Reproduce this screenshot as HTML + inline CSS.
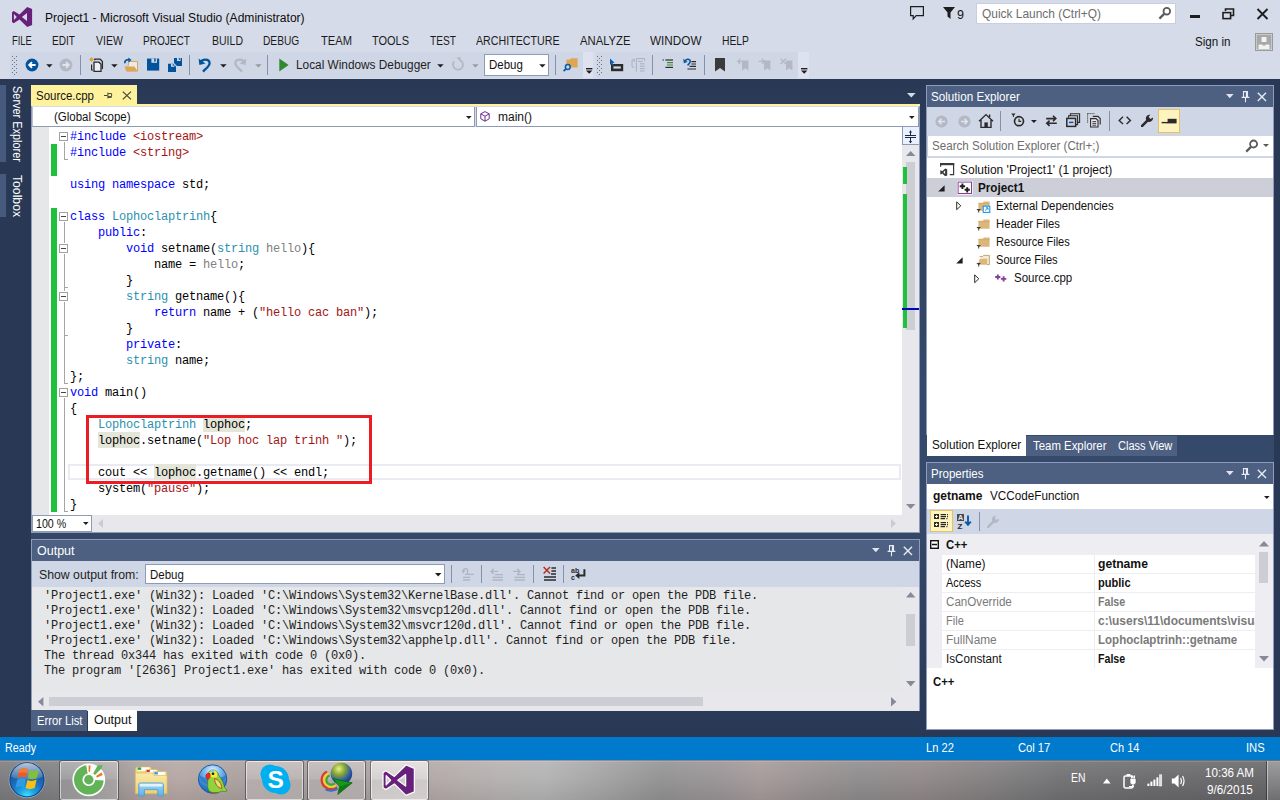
<!DOCTYPE html>
<html lang="en">
<head>
<meta charset="utf-8">
<title>Project1 - Microsoft Visual Studio (Administrator)</title>
<style>
*{box-sizing:border-box;margin:0;padding:0}
html,body{width:1280px;height:800px;overflow:hidden;background:#293955}
body{position:relative;font-family:"Liberation Sans",sans-serif;font-size:12px;color:#1e1e1e}
.a{position:absolute}
.t{position:absolute;white-space:pre;line-height:16px;height:16px;transform-origin:0 0}
.mono{font-family:"Liberation Mono",monospace}
.k{color:#0000ff}.s{color:#a31515}.ty{color:#2b91af}.p{color:#808080}
.hl{background:#e4e6d9;display:inline-block;height:16px;line-height:18px;vertical-align:top}
.cl{position:absolute;left:70px;height:16px;line-height:18px;white-space:pre;font-family:"Liberation Mono",monospace;font-size:12px;color:#000;letter-spacing:-0.2px}
.ot{position:absolute;left:44px;height:15px;line-height:15px;white-space:pre;font-family:"Liberation Mono",monospace;font-size:12px;color:#1e1e1e;letter-spacing:-0.2px}
</style>
</head>
<body>
<div class="a" style="left:0;top:0;width:1280px;height:79px;background:#d6dbe9"></div>
<div class="a" style="left:31px;top:79px;width:1243px;height:658px;background:linear-gradient(180deg,#293955 0%,#35496a 45%,#35496a 65%,#293955 100%)"></div>
<!-- top -->
<svg class="a" style="left:12px;top:7px" width="21" height="21" viewBox="0 0 21 21"><path d="M15.2 0 L20.1 1.9 V17.9 L15.2 20.1 L7.5 12.6 L1.7 16.2 L0 15 V5.2 L1.7 4 L7.5 7.6 Z M15 6 L9.9 10.05 L15 14.1 Z M1.9 7 V13 L4.8 10 Z" fill="#68217a" fill-rule="evenodd"/></svg>
<div class="t" style="left:44.5px;top:10px;font-size:12.5px;color:#0c0c0c;transform:scaleX(0.964);">Project1 - Microsoft Visual Studio (Administrator)</div>
<svg class="a" style="left:909px;top:5px" width="16" height="16" viewBox="0 0 16 16"><path d="M1.6 1.6 H14.4 V10.6 H7.2 L4.2 14 V10.6 H1.6 Z" fill="none" stroke="#1e1e1e" stroke-width="1.2"/></svg>
<svg class="a" style="left:943px;top:7px" width="13" height="13" viewBox="0 0 13 13"><path d="M0 0 H12 L7.5 5.5 V12 L4.5 9.5 V5.5 Z" fill="#1e1e1e"/></svg>
<div class="t" style="left:957px;top:7px;font-size:12.5px;color:#111;">9</div>
<div class="a" style="left:976px;top:3px;width:200px;height:21px;background:#fff;border:1px solid #c9cfdd"></div>
<div class="t" style="left:982px;top:6px;font-size:12.5px;color:#6d6d6d;transform:scaleX(0.954);">Quick Launch (Ctrl+Q)</div>
<svg class="a" style="left:1158px;top:6px" width="14" height="14" viewBox="0 0 14 14"><circle cx="8.8" cy="5.2" r="3.3" fill="none" stroke="#5a5a5a" stroke-width="1.8"/><path d="M6.4 7.6 L1.4 12.6" stroke="#5a5a5a" stroke-width="2.2"/></svg>
<div class="a" style="left:1190px;top:15px;width:10px;height:3px;background:#1e1e1e;"></div>
<svg class="a" style="left:1222px;top:8px" width="13" height="12" viewBox="0 0 13 12"><path d="M3.5 3 V1 H11.5 V7.5 H9" fill="none" stroke="#1e1e1e" stroke-width="1.6"/><rect x="1" y="4.6" width="7.6" height="6" fill="none" stroke="#1e1e1e" stroke-width="1.6"/></svg>
<svg class="a" style="left:1256px;top:8px" width="13" height="12" viewBox="0 0 13 12"><path d="M1.5 1 L11.5 11 M11.5 1 L1.5 11" stroke="#1e1e1e" stroke-width="1.9"/></svg>
<div class="t" style="left:11.5px;top:33px;font-size:12.5px;color:#1b1b1b;transform:scaleX(0.750);">FILE</div>
<div class="t" style="left:52px;top:33px;font-size:12.5px;color:#1b1b1b;transform:scaleX(0.808);">EDIT</div>
<div class="t" style="left:96px;top:33px;font-size:12.5px;color:#1b1b1b;transform:scaleX(0.839);">VIEW</div>
<div class="t" style="left:143px;top:33px;font-size:12.5px;color:#1b1b1b;transform:scaleX(0.806);">PROJECT</div>
<div class="t" style="left:211.5px;top:33px;font-size:12.5px;color:#1b1b1b;transform:scaleX(0.842);">BUILD</div>
<div class="t" style="left:263.4px;top:33px;font-size:12.5px;color:#1b1b1b;transform:scaleX(0.814);">DEBUG</div>
<div class="t" style="left:321px;top:33px;font-size:12.5px;color:#1b1b1b;transform:scaleX(0.893);">TEAM</div>
<div class="t" style="left:372px;top:33px;font-size:12.5px;color:#1b1b1b;transform:scaleX(0.878);">TOOLS</div>
<div class="t" style="left:429.5px;top:33px;font-size:12.5px;color:#1b1b1b;transform:scaleX(0.814);">TEST</div>
<div class="t" style="left:475.5px;top:33px;font-size:12.5px;color:#1b1b1b;transform:scaleX(0.853);">ARCHITECTURE</div>
<div class="t" style="left:579.5px;top:33px;font-size:12.5px;color:#1b1b1b;transform:scaleX(0.901);">ANALYZE</div>
<div class="t" style="left:650px;top:33px;font-size:12.5px;color:#1b1b1b;transform:scaleX(0.939);">WINDOW</div>
<div class="t" style="left:721.5px;top:33px;font-size:12.5px;color:#1b1b1b;transform:scaleX(0.827);">HELP</div>
<div class="t" style="left:1195px;top:34px;font-size:13px;color:#111;transform:scaleX(0.893);">Sign in</div>
<svg class="a" style="left:1255px;top:33px" width="18" height="18" viewBox="0 0 18 18"><rect x="0.5" y="0.5" width="17" height="17" fill="#e8e8ec" stroke="#9a9a9a"/><rect x="1.5" y="1.5" width="15" height="15" fill="#a8a8a8"/><rect x="6.5" y="4" width="5" height="5" fill="#f2f2f2"/><path d="M3.5 16 V11.5 H7 L9 13 L11 11.5 H14.5 V16 Z" fill="#f2f2f2"/></svg>
<div class="a" style="left:10px;top:52px;width:583px;height:26px;background:#cfd6e5;"></div>
<div class="a" style="left:596px;top:52px;width:212px;height:26px;background:#cfd6e5;"></div>
<!-- toolbar -->
<div class="a" style="left:583px;top:52px;width:10px;height:26px;background:#dde2ee;"></div>
<div class="a" style="left:798px;top:52px;width:11px;height:26px;background:#dde2ee;"></div>
<svg class="a" style="left:12px;top:56px" width="6" height="20" viewBox="0 0 6 20"><rect x="0" y="0" width="1" height="1" fill="#66728a"/><rect x="4" y="0" width="1" height="1" fill="#66728a"/><rect x="2" y="2" width="1" height="1" fill="#66728a"/><rect x="0" y="4" width="1" height="1" fill="#66728a"/><rect x="4" y="4" width="1" height="1" fill="#66728a"/><rect x="2" y="6" width="1" height="1" fill="#66728a"/><rect x="0" y="8" width="1" height="1" fill="#66728a"/><rect x="4" y="8" width="1" height="1" fill="#66728a"/><rect x="2" y="10" width="1" height="1" fill="#66728a"/><rect x="0" y="12" width="1" height="1" fill="#66728a"/><rect x="4" y="12" width="1" height="1" fill="#66728a"/><rect x="2" y="14" width="1" height="1" fill="#66728a"/><rect x="0" y="16" width="1" height="1" fill="#66728a"/><rect x="4" y="16" width="1" height="1" fill="#66728a"/><rect x="2" y="18" width="1" height="1" fill="#66728a"/></svg>
<svg class="a" style="left:25px;top:58px" width="14" height="14" viewBox="0 0 14 14"><circle cx="7" cy="7" r="6.4" fill="#00539c"/><path d="M10.6 7 H4.6 M7 4.2 L4.2 7 L7 9.8" fill="none" stroke="#fff" stroke-width="1.9"/></svg>
<svg class="a" style="left:45.5px;top:63.7px" width="7" height="4" viewBox="0 0 7 4"><path d="M0.2 0.2 H6.6 L3.4 3.4 Z" fill="#1e1e1e"/></svg>
<svg class="a" style="left:59px;top:58px" width="14" height="14" viewBox="0 0 14 14"><circle cx="7" cy="7" r="6.4" fill="#b3b8c4"/><path d="M3.4 7 H9.4 M7 4.2 L9.8 7 L7 9.8" fill="none" stroke="#dfe3ec" stroke-width="1.9"/></svg>
<div class="a" style="left:80px;top:55px;width:1px;height:20px;background:#8591a9;"></div>
<svg class="a" style="left:89px;top:57px" width="15" height="16" viewBox="0 0 15 16"><path d="M1 1 L4 4 M4 1 L1 4 M2.5 0.2 V4.8 M0.2 2.5 H4.8" stroke="#e0a030" stroke-width="0.9"/><path d="M5.8 3.2 V2.2 H11.2 L13.4 4.4 V12" fill="none" stroke="#2b2b2b" stroke-width="1.3"/><path d="M2.6 7.5 V13 H4" fill="none" stroke="#2b2b2b" stroke-width="1.2"/><path d="M5 5.2 H10 L12 7.2 V14.4 H5 Z" fill="#eef0f6" stroke="#2b2b2b" stroke-width="1.3"/></svg>
<svg class="a" style="left:110.5px;top:63.7px" width="7" height="4" viewBox="0 0 7 4"><path d="M0.2 0.2 H6.6 L3.4 3.4 Z" fill="#1e1e1e"/></svg>
<svg class="a" style="left:123px;top:57px" width="16" height="16" viewBox="0 0 16 16"><path d="M6 4.5 H14.5 V14 H4 Z" fill="#e8eaf2" stroke="#dca652" stroke-width="1"/><path d="M1.5 9.5 H11.5 L14.5 14.3 H3.2 Z" fill="#dca652"/><path d="M2 6.2 C1.2 3.2 4.2 2.2 6.8 2.9" fill="none" stroke="#0a5aa8" stroke-width="1.7"/><path d="M5.4 0.4 L8.6 3 L5.4 5.6 Z" fill="#0a5aa8"/></svg>
<svg class="a" style="left:147px;top:58px" width="13" height="13" viewBox="0 0 13 13"><path d="M0 0.6 H12.2 V12.6 H0 Z" fill="#00539c"/><rect x="4.4" y="0.6" width="5.6" height="4.2" fill="#cfd6e5"/><rect x="7.2" y="0.6" width="1.5" height="3" fill="#00539c"/></svg>
<svg class="a" style="left:168px;top:58px" width="15" height="15" viewBox="0 0 15 15"><path d="M6 0 H14 V8 H6 Z" fill="#00539c"/><rect x="9" y="0" width="3.6" height="3" fill="#cfd6e5"/><rect x="10.8" y="0" width="1" height="2" fill="#00539c"/><path d="M0 5.8 H7 L8 6.8 V14 H0 Z" fill="#00539c" stroke="#cfd6e5" stroke-width="0"/><path d="M5.4 5.2 L8.6 8.4" stroke="#cfd6e5" stroke-width="1.2"/><rect x="3" y="5.8" width="3.4" height="3" fill="#cfd6e5"/><rect x="4.7" y="5.8" width="1" height="2" fill="#00539c"/></svg>
<div class="a" style="left:189px;top:55px;width:1px;height:20px;background:#8591a9;"></div>
<svg class="a" style="left:198px;top:57px" width="14" height="16" viewBox="0 0 14 16"><path d="M2.2 6.2 C4 1.2 11.5 1.6 11.6 6.2 C11.6 9 8 11.5 5 14.6" fill="none" stroke="#00539c" stroke-width="2.3"/><path d="M0.6 1.6 L1.4 8 L7.4 6.4 Z" fill="#00539c"/></svg>
<svg class="a" style="left:219.8px;top:63.7px" width="7" height="4" viewBox="0 0 7 4"><path d="M0.2 0.2 H6.6 L3.4 3.4 Z" fill="#1e1e1e"/></svg>
<svg class="a" style="left:233px;top:57px" width="14" height="16" viewBox="0 0 14 16"><path d="M11.8 6.2 C10 1.2 2.5 1.6 2.4 6.2 C2.4 9 6 11.5 9 14.6" fill="none" stroke="#b3b8c4" stroke-width="2.3"/><path d="M13.4 1.6 L12.6 8 L6.6 6.4 Z" fill="#b3b8c4"/></svg>
<svg class="a" style="left:254.5px;top:63.7px" width="7" height="4" viewBox="0 0 7 4"><path d="M0.2 0.2 H6.6 L3.4 3.4 Z" fill="#9a9a9a"/></svg>
<div class="a" style="left:267px;top:55px;width:1px;height:20px;background:#8591a9;"></div>
<svg class="a" style="left:279px;top:58px" width="10" height="14" viewBox="0 0 10 14"><path d="M0.3 0.6 L9.6 7 L0.3 13.4 Z" fill="#2f8a2f"/></svg>
<div class="t" style="left:296.3px;top:57px;font-size:12.5px;color:#1e1e1e;transform:scaleX(0.946);">Local Windows Debugger</div>
<svg class="a" style="left:436.8px;top:63.7px" width="7" height="4" viewBox="0 0 7 4"><path d="M0.2 0.2 H6.6 L3.4 3.4 Z" fill="#1e1e1e"/></svg>
<svg class="a" style="left:451px;top:57px" width="14" height="15" viewBox="0 0 14 15"><path d="M9.6 3.4 A5 5 0 1 1 3.2 4.4" fill="none" stroke="#b3b8c4" stroke-width="1.7"/><path d="M5.6 0.6 L9.6 0.2 L9.8 5.4 Z" fill="#b3b8c4"/></svg>
<svg class="a" style="left:471.8px;top:63.7px" width="7" height="4" viewBox="0 0 7 4"><path d="M0.2 0.2 H6.6 L3.4 3.4 Z" fill="#9a9a9a"/></svg>
<div class="a" style="left:484px;top:54px;width:65px;height:22px;background:#fff;border:1px solid #8e9bb4"></div>
<div class="t" style="left:488.8px;top:57px;font-size:12.5px;color:#111;transform:scaleX(0.918);">Debug</div>
<svg class="a" style="left:538.6px;top:63.7px" width="7" height="4" viewBox="0 0 7 4"><path d="M0.2 0.2 H6.6 L3.4 3.4 Z" fill="#1e1e1e"/></svg>
<div class="a" style="left:555px;top:55px;width:1px;height:20px;background:#8591a9;"></div>
<svg class="a" style="left:563px;top:57px" width="16" height="15" viewBox="0 0 16 15"><path d="M3.4 2.6 H7 L8 1.2 H14.6 V10.6 H3.4 Z" fill="#dca652"/><circle cx="4.8" cy="10" r="2.4" fill="#cfd6e5" stroke="#0a5aa8" stroke-width="1.5"/><path d="M3 11.8 L0.6 14.2" stroke="#0a5aa8" stroke-width="1.8"/></svg>
<svg class="a" style="left:586px;top:68px" width="7" height="6" viewBox="0 0 7 6"><rect x="0" y="0" width="6.4" height="1.4" fill="#1e1e1e"/><path d="M0 2.6 H6.4 L3.2 5.8 Z" fill="#1e1e1e"/></svg>
<svg class="a" style="left:597px;top:56px" width="6" height="20" viewBox="0 0 6 20"><rect x="0" y="0" width="1" height="1" fill="#66728a"/><rect x="4" y="0" width="1" height="1" fill="#66728a"/><rect x="2" y="2" width="1" height="1" fill="#66728a"/><rect x="0" y="4" width="1" height="1" fill="#66728a"/><rect x="4" y="4" width="1" height="1" fill="#66728a"/><rect x="2" y="6" width="1" height="1" fill="#66728a"/><rect x="0" y="8" width="1" height="1" fill="#66728a"/><rect x="4" y="8" width="1" height="1" fill="#66728a"/><rect x="2" y="10" width="1" height="1" fill="#66728a"/><rect x="0" y="12" width="1" height="1" fill="#66728a"/><rect x="4" y="12" width="1" height="1" fill="#66728a"/><rect x="2" y="14" width="1" height="1" fill="#66728a"/><rect x="0" y="16" width="1" height="1" fill="#66728a"/><rect x="4" y="16" width="1" height="1" fill="#66728a"/><rect x="2" y="18" width="1" height="1" fill="#66728a"/></svg>
<svg class="a" style="left:609px;top:58px" width="15" height="14" viewBox="0 0 15 14"><rect x="2" y="6" width="12.2" height="7.2" fill="#2b2b2b"/><rect x="4.4" y="8.4" width="7.4" height="2.2" fill="#cfd6e5"/><path d="M1 0.6 L5.6 4.8 L3.6 5 L4.6 7.4 L3.4 7.8 L2.4 5.6 L1 7 Z" fill="#0a5aa8"/></svg>
<svg class="a" style="left:631px;top:58px" width="15" height="14" viewBox="0 0 15 14"><path d="M3.2 2 H1 V9 H3.2 M3.2 0.6 V4" fill="none" stroke="#aab0bf" stroke-width="1"/><path d="M5.4 0.6 H13.6 V3" fill="none" stroke="#aab0bf" stroke-width="1"/><path d="M5.4 0.6 V13.6" stroke="#aab0bf" stroke-width="1"/><path d="M7 3.4 H11.6 M9 5.8 H13.6 M9 8.2 H13.6 M9 10.6 H13.6 M9 13 H13.6" stroke="#aab0bf" stroke-width="1"/></svg>
<div class="a" style="left:652px;top:55px;width:1px;height:20px;background:#8591a9;"></div>
<svg class="a" style="left:662px;top:59px" width="12" height="11" viewBox="0 0 12 11"><path d="M0.6 1 H2" stroke="#2b2b2b" stroke-width="1"/><path d="M3.4 1 H11" stroke="#2b2b2b" stroke-width="1.2"/><path d="M5 3.6 H11 M5 6 H11" stroke="#3c8a2e" stroke-width="1.2"/><path d="M3.4 8.4 H11 " stroke="#2b2b2b" stroke-width="1.2"/><path d="M2 10.4 H11" stroke="#2b2b2b" stroke-width="0"/></svg>
<svg class="a" style="left:683px;top:58px" width="14" height="13" viewBox="0 0 14 13"><path d="M2 3.6 C3 0.2 7.4 0.8 7.2 3.6 C7.2 5.2 5.6 6 4.6 7.4" fill="none" stroke="#0a5aa8" stroke-width="1.6"/><path d="M0.2 0.8 L0.8 5.2 L4.6 4 Z" fill="#0a5aa8"/><path d="M8.4 3.6 H13 M8.4 6 H13 M6.6 8.4 H13 M4.4 11 H13" stroke="#2b2b2b" stroke-width="1.2"/></svg>
<div class="a" style="left:704px;top:55px;width:1px;height:20px;background:#8591a9;"></div>
<svg class="a" style="left:715px;top:58px" width="10" height="14" viewBox="0 0 10 14"><path d="M0 0 H10 V13.4 L5 10 L0 13.4 Z" fill="#3a3a3a"/></svg>
<svg class="a" style="left:737px;top:58px" width="12" height="13" viewBox="0 0 12 13"><path d="M5 2.4 H11.4 V12.6 L8.2 10.2 L5 12.6 Z" fill="#b3b8c4"/><path d="M1 3.4 H6.6 M3.2 1 L0.8 3.4 L3.2 5.8" fill="none" stroke="#b3b8c4" stroke-width="1.4"/></svg>
<svg class="a" style="left:758px;top:58px" width="13" height="13" viewBox="0 0 13 13"><path d="M6 2.4 H12.4 V12.6 L9.2 10.2 L6 12.6 Z" fill="#b3b8c4"/><path d="M0.6 3.4 H6.2 M4 1 L6.4 3.4 L4 5.8" fill="none" stroke="#b3b8c4" stroke-width="1.4"/></svg>
<svg class="a" style="left:780px;top:58px" width="13" height="13" viewBox="0 0 13 13"><path d="M6 2.4 H12.4 V12.6 L9.2 10.2 L6 12.6 Z" fill="#b3b8c4"/><path d="M0.6 0.6 L6 6 M6 0.6 L0.6 6" fill="none" stroke="#b3b8c4" stroke-width="1.3"/></svg>
<svg class="a" style="left:801px;top:68px" width="7" height="6" viewBox="0 0 7 6"><rect x="0" y="0" width="6.4" height="1.4" fill="#1e1e1e"/><path d="M0 2.6 H6.4 L3.2 5.8 Z" fill="#1e1e1e"/></svg>
<!-- left_editor -->
<div class="a" style="left:0px;top:85px;width:6px;height:77px;background:#465a7d;"></div>
<div class="a" style="left:0px;top:174px;width:6px;height:43px;background:#465a7d;"></div>
<div class="t" style="left:24.5px;top:86px;font-size:12.5px;color:#fff;transform:rotate(90deg) scaleX(0.875)">Server Explorer</div>
<div class="t" style="left:24.5px;top:175px;font-size:12.5px;color:#fff;transform:rotate(90deg) scaleX(0.975)">Toolbox</div>
<div class="a" style="left:31px;top:85px;width:106px;height:20px;background:#fff29d;"></div>
<div class="t" style="left:35.5px;top:87.5px;font-size:12.5px;color:#111;transform:scaleX(0.917);">Source.cpp</div>
<svg class="a" style="left:104px;top:92px" width="9" height="7" viewBox="0 0 9 7"><path d="M0 3.5 H3.4 M3.9 0.6 V6.4 M3.9 1.6 H7.6 V4.6 H3.9 M3.9 5.4 H7.6" fill="none" stroke="#4a4a3a" stroke-width="1"/></svg>
<svg class="a" style="left:122px;top:91px" width="10" height="9" viewBox="0 0 10 9"><path d="M0.8 0.6 L9 8.4 M9 0.6 L0.8 8.4" stroke="#4a4a3a" stroke-width="1.3"/></svg>
<svg class="a" style="left:907px;top:93px" width="9" height="5" viewBox="0 0 9 5"><path d="M0 0 H8.6 L4.3 4.6 Z" fill="#d6dbe9"/></svg>
<div class="a" style="left:31px;top:104px;width:889px;height:2px;background:#fff29d;"></div>
<div class="a" style="left:31px;top:106px;width:889px;height:22px;background:#d6dbe9;"></div>
<div class="a" style="left:32px;top:107px;width:443px;height:20px;background:#fff;border-right:1px solid #8e9bb4;border-bottom:1px solid #8e9bb4;border-left:1px solid #b8c0d2"></div>
<div class="a" style="left:476px;top:107px;width:443px;height:20px;background:#fff;border-right:1px solid #8e9bb4;border-bottom:1px solid #8e9bb4;border-left:1px solid #8e9bb4"></div>
<div class="t" style="left:53.5px;top:109.2px;font-size:12.5px;color:#111;transform:scaleX(0.918);">(Global Scope)</div>
<svg class="a" style="left:466px;top:116px" width="6" height="3" viewBox="0 0 6 3"><path d="M0 0 H5.6 L2.8 3 Z" fill="#1e1e1e"/></svg>
<svg class="a" style="left:480px;top:111px" width="10" height="11" viewBox="0 0 10 11"><path d="M5 0.6 L9.2 2.8 V7.8 L5 10.2 L0.8 7.8 V2.8 Z M0.8 2.8 L5 5.2 L9.2 2.8 M5 5.2 V10.2" fill="none" stroke="#6a2c91" stroke-width="1"/></svg>
<div class="t" style="left:497.5px;top:109.2px;font-size:12.5px;color:#111;transform:scaleX(0.960);">main()</div>
<svg class="a" style="left:909px;top:116px" width="6" height="3" viewBox="0 0 6 3"><path d="M0 0 H5.6 L2.8 3 Z" fill="#1e1e1e"/></svg>
<div class="a" style="left:31px;top:127px;width:871px;height:388px;background:#fff;"></div>
<div class="a" style="left:31px;top:127px;width:18px;height:388px;background:#e6e7e8;"></div>
<div class="a" style="left:68px;top:464px;width:833px;height:16px;background:#fff;border:2px solid #eaeaf2"></div>
<div class="a" style="left:51px;top:144px;width:6px;height:32px;background:#1ec13c;"></div>
<div class="a" style="left:51px;top:208px;width:6px;height:304px;background:#1ec13c;"></div>
<div class="a" style="left:64px;top:141px;width:1px;height:19px;background:#a5a5a5;"></div>
<div class="a" style="left:64px;top:159px;width:4px;height:1px;background:#a5a5a5;"></div>
<div class="a" style="left:64px;top:221px;width:1px;height:163px;background:#a5a5a5;"></div>
<div class="a" style="left:64px;top:383px;width:4px;height:1px;background:#a5a5a5;"></div>
<div class="a" style="left:64px;top:287px;width:4px;height:1px;background:#a5a5a5;"></div>
<div class="a" style="left:64px;top:335px;width:4px;height:1px;background:#a5a5a5;"></div>
<div class="a" style="left:64px;top:397px;width:1px;height:115px;background:#a5a5a5;"></div>
<div class="a" style="left:64px;top:511px;width:4px;height:1px;background:#a5a5a5;"></div>
<div class="a" style="left:59px;top:132px;width:9px;height:9px;border:1px solid #a0a0a0;background:#fff;box-shadow:0 0 0 1px #fff"></div><div class="a" style="left:61px;top:136px;width:5px;height:1px;background:#444"></div>
<div class="a" style="left:59px;top:212px;width:9px;height:9px;border:1px solid #a0a0a0;background:#fff;box-shadow:0 0 0 1px #fff"></div><div class="a" style="left:61px;top:216px;width:5px;height:1px;background:#444"></div>
<div class="a" style="left:59px;top:244px;width:9px;height:9px;border:1px solid #a0a0a0;background:#fff;box-shadow:0 0 0 1px #fff"></div><div class="a" style="left:61px;top:248px;width:5px;height:1px;background:#444"></div>
<div class="a" style="left:59px;top:292px;width:9px;height:9px;border:1px solid #a0a0a0;background:#fff;box-shadow:0 0 0 1px #fff"></div><div class="a" style="left:61px;top:296px;width:5px;height:1px;background:#444"></div>
<div class="a" style="left:59px;top:388px;width:9px;height:9px;border:1px solid #a0a0a0;background:#fff;box-shadow:0 0 0 1px #fff"></div><div class="a" style="left:61px;top:392px;width:5px;height:1px;background:#444"></div>
<div class="cl" style="top:128px"><span class="k">#include</span> <span class="s">&lt;iostream&gt;</span></div>
<div class="cl" style="top:144px"><span class="k">#include</span> <span class="s">&lt;string&gt;</span></div>
<div class="cl" style="top:176px"><span class="k">using namespace</span> std;</div>
<div class="cl" style="top:208px"><span class="k">class</span> <span class="ty">Lophoclaptrinh</span>{</div>
<div class="cl" style="top:224px">    <span class="k">public</span>:</div>
<div class="cl" style="top:240px">        <span class="k">void</span> setname(<span class="ty">string</span> <span class="p">hello</span>){</div>
<div class="cl" style="top:256px">            name = <span class="p">hello</span>;</div>
<div class="cl" style="top:272px">        }</div>
<div class="cl" style="top:288px">        <span class="ty">string</span> getname(){</div>
<div class="cl" style="top:304px">            <span class="k">return</span> name + (<span class="s">"hello cac ban"</span>);</div>
<div class="cl" style="top:320px">        }</div>
<div class="cl" style="top:336px">        <span class="k">private</span>:</div>
<div class="cl" style="top:352px">        <span class="ty">string</span> name;</div>
<div class="cl" style="top:368px">};</div>
<div class="cl" style="top:384px"><span class="k">void</span> main()</div>
<div class="cl" style="top:400px">{</div>
<div class="cl" style="top:416px">    <span class="ty">Lophoclaptrinh</span> <span class="hl">lophoc</span>;</div>
<div class="cl" style="top:432px">    <span class="hl">lophoc</span>.setname(<span class="s">"Lop hoc lap trinh "</span>);</div>
<div class="cl" style="top:464px">    cout &lt;&lt; <span class="hl">lophoc</span>.getname() &lt;&lt; endl;</div>
<div class="cl" style="top:480px">    system(<span class="s">"pause"</span>);</div>
<div class="cl" style="top:496px">}</div>
<div class="a" style="left:86px;top:415px;width:286px;height:69px;border:3px solid #ec1c24"></div>
<div class="a" style="left:902px;top:127px;width:18px;height:388px;background:#e8e8ec;"></div>
<div class="a" style="left:902px;top:127px;width:17px;height:18px;background:#eaf0ff;border-left:1px solid #8e9bb4;border-bottom:1px solid #8e9bb4"></div>
<svg class="a" style="left:905px;top:130px" width="12" height="14" viewBox="0 0 12 14"><path d="M0 5.5 H11 M0 7.5 H11 M5.5 0.6 V5.5 M5.5 7.5 V13" stroke="#1b2a44" stroke-width="1"/><path d="M3.8 2.6 L5.5 0.4 L7.2 2.6 Z M3.8 11 L5.5 13.2 L7.2 11 Z" fill="#1b2a44"/></svg>
<svg class="a" style="left:906px;top:151px" width="10" height="5" viewBox="0 0 10 5"><path d="M0 5 L4.7 0 L9.4 5 Z" fill="#868999"/></svg>
<div class="a" style="left:906px;top:162px;width:9px;height:168px;background:#cdcdd4;"></div>
<div class="a" style="left:903px;top:167px;width:4px;height:17px;background:#1ec13c;"></div>
<div class="a" style="left:903px;top:194px;width:4px;height:134px;background:#1ec13c;"></div>
<div class="a" style="left:902px;top:308px;width:17px;height:2px;background:#0000c8;"></div>
<svg class="a" style="left:906px;top:504px" width="10" height="5" viewBox="0 0 10 5"><path d="M0 0 L4.7 5 L9.4 0 Z" fill="#868999"/></svg>
<div class="a" style="left:31px;top:515px;width:889px;height:17px;background:#e8e8ec;"></div>
<div class="a" style="left:32px;top:515px;width:60px;height:17px;background:#fff;border:1px solid #8e9bb4"></div>
<div class="t" style="left:35.8px;top:515.5px;font-size:12.5px;color:#111;transform:scaleX(0.852);">100 %</div>
<svg class="a" style="left:83px;top:522px" width="6" height="3" viewBox="0 0 6 3"><path d="M0 0 H5.6 L2.8 3 Z" fill="#1e1e1e"/></svg>
<svg class="a" style="left:98px;top:519px" width="5" height="9" viewBox="0 0 5 9"><path d="M5 0 V9 L0 4.5 Z" fill="#c9cbd5"/></svg>
<svg class="a" style="left:891px;top:519px" width="5" height="9" viewBox="0 0 5 9"><path d="M0 0 V9 L5 4.5 Z" fill="#c9cbd5"/></svg>
<div class="a" style="left:31px;top:106px;width:1px;height:427px;background:#8e9bbc;"></div>
<div class="a" style="left:919px;top:106px;width:1px;height:427px;background:#8e9bbc;"></div>
<div class="a" style="left:31px;top:532px;width:889px;height:1px;background:#8e9bbc;"></div>
<!-- output -->
<div class="a" style="left:31px;top:539px;width:889px;height:172px;background:#e6e7e8;border:1px solid #8e9bbc;border-bottom:0"></div>
<div class="a" style="left:32px;top:540px;width:887px;height:21px;background:#4d6082;"></div>
<div class="t" style="left:36.5px;top:543px;font-size:12.5px;color:#fff;transform:scaleX(0.999);">Output</div>
<svg class="a" style="left:871.5px;top:548px" width="8" height="5" viewBox="0 0 8 5"><path d="M0 0 H7.6 L3.8 4.2 Z" fill="#dfe4ef"/></svg>
<svg class="a" style="left:887px;top:545px" width="9" height="12" viewBox="0 0 9 12"><path d="M2.5 0.6 H6.5 V6.2 H2.5 Z M5.4 0.6 V6.2 M0.6 6.4 H8.4 M4.5 6.4 V11.2" fill="none" stroke="#e6eaf3" stroke-width="1.1"/></svg>
<svg class="a" style="left:903px;top:546px" width="10" height="10" viewBox="0 0 10 10"><path d="M0.8 0.8 L9 9 M9 0.8 L0.8 9" stroke="#e6eaf3" stroke-width="1.4"/></svg>
<div class="a" style="left:32px;top:561px;width:887px;height:26px;background:#cfd6e5;"></div>
<div class="t" style="left:39px;top:567px;font-size:12.5px;color:#1e1e1e;transform:scaleX(0.982);">Show output from:</div>
<div class="a" style="left:145px;top:564px;width:300px;height:20px;background:#fff;border:1px solid #8e9bb4"></div>
<div class="t" style="left:149.5px;top:567px;font-size:12.5px;color:#111;transform:scaleX(0.918);">Debug</div>
<svg class="a" style="left:435px;top:573px" width="7" height="4" viewBox="0 0 7 4"><path d="M0 0 H6.4 L3.2 3.4 Z" fill="#1e1e1e"/></svg>
<div class="a" style="left:451px;top:565px;width:1px;height:18px;background:#8591a9;"></div>
<div class="a" style="left:481px;top:565px;width:1px;height:18px;background:#8591a9;"></div>
<div class="a" style="left:533px;top:565px;width:1px;height:18px;background:#8591a9;"></div>
<div class="a" style="left:563px;top:565px;width:1px;height:18px;background:#8591a9;"></div>
<svg class="a" style="left:461px;top:567px" width="14" height="14" viewBox="0 0 14 14"><path d="M2.2 4.2 C2.4 0.6 6.6 0.8 6.6 4.2 V8" fill="none" stroke="#b0b5c2" stroke-width="1.3"/><path d="M0.2 3.4 L2.2 6.4 L4.4 3.4 Z" fill="#b0b5c2"/><path d="M4 7.4 H13 M2 10.4 H9 M2 13 H9" stroke="#b0b5c2" stroke-width="1.3"/></svg>
<svg class="a" style="left:490px;top:568px" width="14" height="13" viewBox="0 0 14 13"><path d="M1 3.4 H8 M3.6 0.8 L1 3.4 L3.6 6" fill="none" stroke="#b0b5c2" stroke-width="1.3"/><path d="M5 6.6 H13 M2.4 9.4 H13 M2.4 12 H13" stroke="#b0b5c2" stroke-width="1.3"/></svg>
<svg class="a" style="left:512px;top:568px" width="14" height="13" viewBox="0 0 14 13"><path d="M1 3.4 H8 M5.4 0.8 L8 3.4 L5.4 6" fill="none" stroke="#b0b5c2" stroke-width="1.3"/><path d="M5 6.6 H13 M2.4 9.4 H13 M2.4 12 H13" stroke="#b0b5c2" stroke-width="1.3"/></svg>
<svg class="a" style="left:543px;top:566px" width="14" height="15" viewBox="0 0 14 15"><path d="M0.6 1 L7 7.6 M7 1 L0.6 7.6" stroke="#b5311c" stroke-width="1.5"/><path d="M8.4 2 H13 M8.4 5 H13 M8 8 H13 M1 11 H13 M1 14 H13" stroke="#2b2b2b" stroke-width="1.5"/></svg>
<svg class="a" style="left:571px;top:568px" width="16" height="12" viewBox="0 0 16 12"><text x="0" y="5" font-family="Liberation Sans,sans-serif" font-size="7" font-weight="bold" fill="#2b2b2b">ab</text><text x="0" y="11.5" font-family="Liberation Sans,sans-serif" font-size="7" font-weight="bold" fill="#2b2b2b">c</text><path d="M13.4 1.2 V7.6 H7" fill="none" stroke="#2b2b2b" stroke-width="2"/><path d="M4.2 7.6 L8.4 4.2 V11 Z" fill="#2b2b2b"/></svg>
<div class="ot" style="top:589px">'Project1.exe' (Win32): Loaded 'C:\Windows\System32\KernelBase.dll'. Cannot find or open the PDB file.</div>
<div class="ot" style="top:604px">'Project1.exe' (Win32): Loaded 'C:\Windows\System32\msvcp120d.dll'. Cannot find or open the PDB file.</div>
<div class="ot" style="top:619px">'Project1.exe' (Win32): Loaded 'C:\Windows\System32\msvcr120d.dll'. Cannot find or open the PDB file.</div>
<div class="ot" style="top:634px">'Project1.exe' (Win32): Loaded 'C:\Windows\System32\apphelp.dll'. Cannot find or open the PDB file.</div>
<div class="ot" style="top:649px">The thread 0x344 has exited with code 0 (0x0).</div>
<div class="ot" style="top:664px">The program '[2636] Project1.exe' has exited with code 0 (0x0).</div>
<div class="a" style="left:902px;top:587px;width:17px;height:105px;background:#e8e8ec;"></div>
<svg class="a" style="left:906px;top:592px" width="10" height="6" viewBox="0 0 10 6"><path d="M0 5.4 L4.7 0 L9.4 5.4 Z" fill="#868999"/></svg>
<div class="a" style="left:906px;top:614px;width:9px;height:32px;background:#cdced5;"></div>
<svg class="a" style="left:906px;top:681px" width="10" height="6" viewBox="0 0 10 6"><path d="M0 0 L4.7 5.4 L9.4 0 Z" fill="#868999"/></svg>
<div class="a" style="left:32px;top:692px;width:887px;height:18px;background:#e8e8ec;"></div>
<svg class="a" style="left:38px;top:697px" width="6" height="10" viewBox="0 0 6 10"><path d="M5.4 0 V9.4 L0 4.7 Z" fill="#868999"/></svg>
<div class="a" style="left:49px;top:697px;width:654px;height:9px;background:#cdced5;"></div>
<svg class="a" style="left:891px;top:697px" width="6" height="10" viewBox="0 0 6 10"><path d="M0 0 V9.4 L5.4 4.7 Z" fill="#868999"/></svg>
<div class="a" style="left:31px;top:710px;width:56px;height:21px;background:#4d6082;"></div>
<div class="t" style="left:36.5px;top:712.5px;font-size:12.5px;color:#fff;transform:scaleX(0.897);">Error List</div>
<div class="a" style="left:88px;top:710px;width:49px;height:21px;background:#fff;"></div>
<div class="t" style="left:93.6px;top:712px;font-size:12.5px;color:#111;transform:scaleX(0.997);">Output</div>
<!-- solexp -->
<div class="a" style="left:926px;top:85px;width:348px;height:350px;background:#4d6082;border:1px solid #8e9bbc;border-bottom:0"></div>
<div class="a" style="left:927px;top:86px;width:346px;height:21px;background:#4d6082;"></div>
<div class="t" style="left:931.3px;top:89px;font-size:12.5px;color:#fff;transform:scaleX(0.933);">Solution Explorer</div>
<svg class="a" style="left:1225.5px;top:94px" width="8" height="5" viewBox="0 0 8 5"><path d="M0 0 H7.6 L3.8 4.2 Z" fill="#dfe4ef"/></svg>
<svg class="a" style="left:1241px;top:91px" width="9" height="12" viewBox="0 0 9 12"><path d="M2.5 0.6 H6.5 V6.2 H2.5 Z M5.4 0.6 V6.2 M0.6 6.4 H8.4 M4.5 6.4 V11.2" fill="none" stroke="#e6eaf3" stroke-width="1.1"/></svg>
<svg class="a" style="left:1257px;top:92px" width="10" height="10" viewBox="0 0 10 10"><path d="M0.8 0.8 L9 9 M9 0.8 L0.8 9" stroke="#e6eaf3" stroke-width="1.4"/></svg>
<div class="a" style="left:927px;top:107px;width:346px;height:29px;background:#cfd6e5;"></div>
<svg class="a" style="left:935px;top:114.5px" width="13" height="13" viewBox="0 0 13 13"><circle cx="6.5" cy="6.5" r="6.1" fill="#b3b8c4"/><path d="M10 6.5 H4.2 M6.4 3.8 L3.8 6.5 L6.4 9.2" fill="none" stroke="#dfe3ec" stroke-width="1.7"/></svg>
<svg class="a" style="left:957.5px;top:114.5px" width="13" height="13" viewBox="0 0 13 13"><circle cx="6.5" cy="6.5" r="6.1" fill="#b3b8c4"/><path d="M3 6.5 H8.8 M6.6 3.8 L9.2 6.5 L6.6 9.2" fill="none" stroke="#dfe3ec" stroke-width="1.7"/></svg>
<svg class="a" style="left:978px;top:113px" width="16" height="16" viewBox="0 0 16 16"><path d="M1 8.2 L8 1.6 L15 8.2 M11.6 4 V1.6 M3 7 V14.4 H13 V7" fill="none" stroke="#2b2b2b" stroke-width="1.4"/><rect x="6.4" y="9.4" width="3.4" height="5" fill="#2b2b2b"/></svg>
<div class="a" style="left:1000px;top:111px;width:1px;height:20px;background:#8591a9;"></div>
<svg class="a" style="left:1011px;top:113px" width="14" height="14" viewBox="0 0 14 14"><path d="M0.2 0.6 H4.6 L2.9 2.6 V4 H1.9 V2.6 Z" fill="#2b2b2b"/><circle cx="8" cy="8.2" r="4.5" fill="none" stroke="#2b2b2b" stroke-width="1.7"/><path d="M8 5.8 V8.4 H10.2" fill="none" stroke="#2b2b2b" stroke-width="1.1"/></svg>
<svg class="a" style="left:1031px;top:120px" width="6" height="4" viewBox="0 0 6 4"><path d="M0 0 H5.8 L2.9 3 Z" fill="#1e1e1e"/></svg>
<svg class="a" style="left:1045px;top:115px" width="13" height="12" viewBox="0 0 13 12"><path d="M1.2 3.6 H10.6 M8 0.8 L10.8 3.6 L8 6.2 M11.8 8.2 H2 M4.6 5.6 L1.8 8.2 L4.6 10.8" fill="none" stroke="#2b2b2b" stroke-width="1.6"/></svg>
<svg class="a" style="left:1066px;top:113px" width="15" height="15" viewBox="0 0 15 15"><path d="M4.4 2.6 V0.8 H13.6 V9.4 H11.8 M2.6 4.8 V2.8 H11.6 V11.6 H9.8" fill="none" stroke="#2b2b2b" stroke-width="1.1"/><rect x="0.8" y="5.4" width="8.8" height="8" fill="none" stroke="#2b2b2b" stroke-width="1.5"/><path d="M3 9.4 H7.4" stroke="#0a5aa8" stroke-width="1.5"/></svg>
<svg class="a" style="left:1087px;top:113px" width="16" height="15" viewBox="0 0 16 15"><path d="M0.6 0.6 H7.4 M0.6 0.6 V9.6" fill="none" stroke="#2b2b2b" stroke-width="1" stroke-dasharray="1 1"/><path d="M5.8 3.4 H11 L13.2 5.6 V11.6" fill="none" stroke="#2b2b2b" stroke-width="1.1"/><path d="M3.6 5.6 H9 L11 7.6 V14 H3.6 Z" fill="#e8ebf3" stroke="#2b2b2b" stroke-width="1.1"/><path d="M5.4 8.6 H9.2 M5.4 10.4 H9.2 M5.4 12.2 H9.2" stroke="#2b2b2b" stroke-width="0.9"/></svg>
<div class="a" style="left:1109px;top:111px;width:1px;height:20px;background:#8591a9;"></div>
<svg class="a" style="left:1118px;top:116px" width="14" height="9" viewBox="0 0 14 9"><path d="M5 0.8 L1.2 4.4 L5 8 M8.6 0.8 L12.4 4.4 L8.6 8" fill="none" stroke="#2b2b2b" stroke-width="1.4"/></svg>
<svg class="a" style="left:1141px;top:114px" width="13" height="13" viewBox="0 0 13 13"><path d="M0.9 12.1 L6.6 6.4" stroke="#2b2b2b" stroke-width="2.6" stroke-linecap="round"/><path d="M11.9 3.4 A3.6 3.6 0 1 1 9.2 0.8 L7.6 3 L9.6 5 Z" fill="#2b2b2b"/></svg>
<div class="a" style="left:1158px;top:109px;width:22px;height:24px;background:#fff4bf;border:1px solid #e5c365"></div>
<svg class="a" style="left:1161px;top:118px" width="16" height="6" viewBox="0 0 16 6"><path d="M0.6 4.6 H7" stroke="#2b2b2b" stroke-width="1.4"/><rect x="6.6" y="0.8" width="9" height="4.6" fill="#2b2b2b"/></svg>
<div class="a" style="left:927px;top:136px;width:346px;height:20px;background:#fff;border-left:1px solid #c5cbd9"></div>
<div class="t" style="left:932px;top:138px;font-size:12.5px;color:#6d6d6d;transform:scaleX(0.928);">Search Solution Explorer (Ctrl+;)</div>
<svg class="a" style="left:1245px;top:139px" width="14" height="14" viewBox="0 0 14 14"><circle cx="8.6" cy="5" r="3.5" fill="none" stroke="#5a5a5a" stroke-width="1.8"/><path d="M6.2 7.6 L1.2 12.6" stroke="#5a5a5a" stroke-width="2.2"/></svg>
<svg class="a" style="left:1263px;top:144px" width="6" height="4" viewBox="0 0 6 4"><path d="M0 0 H6 L3 3 Z" fill="#5a5a5a"/></svg>
<div class="a" style="left:927px;top:156px;width:346px;height:2px;background:#cfd6e5;"></div>
<div class="a" style="left:927px;top:158px;width:346px;height:277px;background:#fff;"></div>
<div class="a" style="left:927px;top:178px;width:346px;height:18.5px;background:#ccced8;"></div>
<svg class="a" style="left:940px;top:163px" width="15" height="14" viewBox="0 0 15 14"><path d="M0.6 3.8 V0.8 H13.6 V11.6 H9.8" fill="none" stroke="#3a3a3a" stroke-width="1.2"/><path d="M0 1.1 H14.2" stroke="#3a3a3a" stroke-width="2.2"/><path d="M5.2 5.4 L7.2 6.2 V12.4 L5.2 13.2 L2.2 10.4 L0.9 11.4 L0.3 11 V7.6 L0.9 7.2 L2.2 8.2 Z M5.1 7.6 L3.3 9.3 L5.1 11 Z" fill="#3a3a3a" fill-rule="evenodd"/></svg>
<div class="t" style="left:960.1px;top:161.5px;font-size:12.5px;color:#111;transform:scaleX(0.958);">Solution 'Project1' (1 project)</div>
<svg class="a" style="left:938px;top:185px" width="7" height="7" viewBox="0 0 7 7"><path d="M6.6 0.2 V6.6 H0.2 Z" fill="#1e1e1e"/></svg>
<svg class="a" style="left:957px;top:181px" width="16" height="14" viewBox="0 0 16 14"><rect x="0" y="0" width="15.6" height="13.6" fill="#fff"/><rect x="1.1" y="1.1" width="13.4" height="11.4" fill="#fff" stroke="#8a3d9a" stroke-width="1"/><path d="M5.4 2.6 V8 M2.7 5.3 H8.1 M10.2 6.2 V11.4 M7.6 8.8 H12.8" stroke="#1e1e1e" stroke-width="1.9"/></svg>
<div class="t" style="left:978.1px;top:179.5px;font-size:12.5px;color:#111;font-weight:bold;transform:scaleX(0.937);">Project1</div>
<svg class="a" style="left:956px;top:201px" width="6" height="10" viewBox="0 0 6 10"><path d="M0.7 0.9 V8.7 L4.8 4.8 Z" fill="#fff" stroke="#2b2b2b" stroke-width="1"/></svg>
<svg class="a" style="left:976px;top:199.5px" width="15" height="13" viewBox="0 0 15 13"><path d="M2.4 2.8 H6.8 L7.8 1.4 H13.6 V10.8 H2.4 Z" fill="#dcb67a"/><path d="M2.4 3.6 H13.6" stroke="#c9a469" stroke-width="0.6"/><path d="M0.4 9 H5 L3.2 10.8 V12.6 H2.2 V10.8 Z" fill="#3a3a3a"/><rect x="7.2" y="6.2" width="6.6" height="6.2" fill="#fff" stroke="#1c97ea" stroke-width="1.1"/><path d="M9 10.6 L12 7.8 M10 7.8 H12 V9.8" fill="none" stroke="#1c97ea" stroke-width="1"/></svg>
<div class="t" style="left:996px;top:197.5px;font-size:12.5px;color:#111;transform:scaleX(0.910);">External Dependencies</div>
<svg class="a" style="left:976px;top:217.5px" width="15" height="13" viewBox="0 0 15 13"><path d="M2.4 2.8 H6.8 L7.8 1.4 H13.6 V10.8 H2.4 Z" fill="#dcb67a"/><path d="M2.4 3.6 H13.6" stroke="#c9a469" stroke-width="0.6"/><path d="M0.4 9 H5 L3.2 10.8 V12.6 H2.2 V10.8 Z" fill="#3a3a3a"/></svg>
<div class="t" style="left:996px;top:215.5px;font-size:12.5px;color:#111;transform:scaleX(0.902);">Header Files</div>
<svg class="a" style="left:976px;top:235.5px" width="15" height="13" viewBox="0 0 15 13"><path d="M2.4 2.8 H6.8 L7.8 1.4 H13.6 V10.8 H2.4 Z" fill="#dcb67a"/><path d="M2.4 3.6 H13.6" stroke="#c9a469" stroke-width="0.6"/><path d="M0.4 9 H5 L3.2 10.8 V12.6 H2.2 V10.8 Z" fill="#3a3a3a"/></svg>
<div class="t" style="left:996px;top:233.5px;font-size:12.5px;color:#111;transform:scaleX(0.885);">Resource Files</div>
<svg class="a" style="left:956px;top:256.5px" width="7" height="7" viewBox="0 0 7 7"><path d="M6.6 0.2 V6.6 H0.2 Z" fill="#1e1e1e"/></svg>
<svg class="a" style="left:976px;top:253.5px" width="15" height="13" viewBox="0 0 15 13"><path d="M3.6 2.6 H6.6 L7.6 1.4 H13.4 V10.6 H11" fill="#f3ead9" stroke="#c9a469" stroke-width="1"/><path d="M1.6 10.8 L3.8 4.8 H11.4 L11 10.8 Z" fill="#dcb67a"/><path d="M0.4 9 H5 L3.2 10.8 V12.6 H2.2 V10.8 Z" fill="#3a3a3a"/></svg>
<div class="t" style="left:996px;top:251.5px;font-size:12.5px;color:#111;transform:scaleX(0.887);">Source Files</div>
<svg class="a" style="left:974px;top:273.5px" width="6" height="10" viewBox="0 0 6 10"><path d="M0.7 0.9 V8.7 L4.8 4.8 Z" fill="#fff" stroke="#2b2b2b" stroke-width="1"/></svg>
<svg class="a" style="left:995px;top:274px" width="13" height="8" viewBox="0 0 13 8"><path d="M2.8 0.4 V5.6 M0.2 3 H5.4 M8.6 2.2 V7.6 M5.9 4.9 H11.3" stroke="#8a3d9a" stroke-width="1.9"/></svg>
<div class="t" style="left:1014.4px;top:269.5px;font-size:12.5px;color:#111;transform:scaleX(0.920);">Source.cpp</div>
<div class="a" style="left:927px;top:435px;width:99px;height:21px;background:#fff;"></div>
<div class="t" style="left:931.9px;top:437px;font-size:12.5px;color:#111;transform:scaleX(0.937);">Solution Explorer</div>
<div class="a" style="left:1026px;top:435.5px;width:151px;height:20px;background:#4d6082;"></div>
<div class="t" style="left:1033.4px;top:437.5px;font-size:12.5px;color:#fff;transform:scaleX(0.912);">Team Explorer</div>
<div class="t" style="left:1117.6px;top:437.5px;font-size:12.5px;color:#fff;transform:scaleX(0.882);">Class View</div>
<!-- props -->
<div class="a" style="left:926px;top:462px;width:348px;height:268px;background:#fff;border:1px solid #8e9bbc"></div>
<div class="a" style="left:927px;top:463px;width:346px;height:21px;background:#4d6082;"></div>
<div class="t" style="left:931.4px;top:465.8px;font-size:12.5px;color:#fff;transform:scaleX(0.922);">Properties</div>
<svg class="a" style="left:1225.5px;top:471px" width="8" height="5" viewBox="0 0 8 5"><path d="M0 0 H7.6 L3.8 4.2 Z" fill="#dfe4ef"/></svg>
<svg class="a" style="left:1241px;top:468px" width="9" height="12" viewBox="0 0 9 12"><path d="M2.5 0.6 H6.5 V6.2 H2.5 Z M5.4 0.6 V6.2 M0.6 6.4 H8.4 M4.5 6.4 V11.2" fill="none" stroke="#e6eaf3" stroke-width="1.1"/></svg>
<svg class="a" style="left:1257px;top:469px" width="10" height="10" viewBox="0 0 10 10"><path d="M0.8 0.8 L9 9 M9 0.8 L0.8 9" stroke="#e6eaf3" stroke-width="1.4"/></svg>
<div class="t" style="left:933.1px;top:487.6px;font-size:12.5px;color:#111;font-weight:bold;transform:scaleX(0.961);">getname</div>
<div class="t" style="left:989.6px;top:487.6px;font-size:12.5px;color:#111;transform:scaleX(0.938);">VCCodeFunction</div>
<svg class="a" style="left:1264px;top:496px" width="6" height="4" viewBox="0 0 6 4"><path d="M0 0 H5.6 L2.8 3 Z" fill="#1e1e1e"/></svg>
<div class="a" style="left:927px;top:509px;width:346px;height:25px;background:#cfd6e5;"></div>
<div class="a" style="left:930px;top:510px;width:23px;height:22px;background:#fff4bf;border:1px solid #e5c365"></div>
<svg class="a" style="left:934px;top:514px" width="15" height="14" viewBox="0 0 15 14"><rect x="0" y="0" width="5" height="5" fill="#2b2b2b"/><path d="M1 2.5 H4 M2.5 1 V4" stroke="#fff4bf" stroke-width="1"/><path d="M6.6 0.6 H12 M6.6 2.6 H12 M6.6 4.6 H11" stroke="#2b2b2b" stroke-width="1.1"/><path d="M13 0.6 H14 M13 2.6 H14 M12.4 4.6 H13.4" stroke="#2b2b2b" stroke-width="1.1"/><rect x="0" y="8" width="5" height="5" fill="#2b2b2b"/><path d="M1 10.5 H4 M2.5 9 V12" stroke="#fff4bf" stroke-width="1"/><path d="M6.6 8.6 H12 M6.6 10.6 H12 M6.6 12.6 H11" stroke="#2b2b2b" stroke-width="1.1"/><path d="M13 8.6 H14 M13 10.6 H14 M12.4 12.6 H13.4" stroke="#2b2b2b" stroke-width="1.1"/></svg>
<svg class="a" style="left:957px;top:513.5px" width="15" height="15" viewBox="0 0 15 15"><rect x="0" y="0" width="7" height="7" fill="#4a4a4a"/><text x="0.9" y="6.1" font-family="Liberation Sans,sans-serif" font-size="7" font-weight="bold" fill="#e9ecf3">A</text><text x="0.6" y="14.6" font-family="Liberation Sans,sans-serif" font-size="8" font-weight="bold" fill="#2b2b2b">Z</text><path d="M11 1.6 V10.4 M8.2 7.6 L11 10.8 L13.8 7.6" fill="none" stroke="#0a5aa8" stroke-width="1.9"/></svg>
<div class="a" style="left:979px;top:512px;width:1px;height:19px;background:#8591a9;"></div>
<svg class="a" style="left:987px;top:514.5px" width="13" height="13" viewBox="0 0 13 13"><path d="M0.9 12.1 L6.6 6.4" stroke="#b3b8c4" stroke-width="2.6" stroke-linecap="round"/><path d="M11.9 3.4 A3.6 3.6 0 1 1 9.2 0.8 L7.6 3 L9.6 5 Z" fill="#b3b8c4"/></svg>
<div class="a" style="left:927px;top:534px;width:346px;height:134px;background:#eeeef2;"></div>
<svg class="a" style="left:930px;top:540px" width="9" height="9" viewBox="0 0 9 9"><rect x="0.7" y="0.7" width="7.6" height="7.6" fill="#fff" stroke="#111" stroke-width="1.4"/><path d="M2 4.5 H7" stroke="#111" stroke-width="1.5"/></svg>
<div class="t" style="left:946.2px;top:537px;font-size:12.5px;color:#111;font-weight:bold;transform:scaleX(0.906);">C++</div>
<div class="a" style="left:942px;top:555px;width:152px;height:18px;background:#fff;"></div>
<div class="a" style="left:1095px;top:555px;width:160px;height:18px;background:#fff;"></div>
<div class="t" style="left:946.2px;top:555.8px;font-size:12.5px;color:#111;transform:scaleX(0.948);">(Name)</div>
<div class="t" style="left:1098px;top:555.8px;font-size:12.5px;color:#111;font-weight:bold;transform:scaleX(0.971);">getname</div>
<div class="a" style="left:942px;top:574px;width:152px;height:18px;background:#fff;"></div>
<div class="a" style="left:1095px;top:574px;width:160px;height:18px;background:#fff;"></div>
<div class="t" style="left:946.2px;top:574.8px;font-size:12.5px;color:#111;transform:scaleX(0.876);">Access</div>
<div class="t" style="left:1098px;top:574.8px;font-size:12.5px;color:#111;font-weight:bold;transform:scaleX(0.886);">public</div>
<div class="a" style="left:942px;top:593px;width:152px;height:18px;background:#fff;"></div>
<div class="a" style="left:1095px;top:593px;width:160px;height:18px;background:#fff;"></div>
<div class="t" style="left:946.2px;top:593.8px;font-size:12.5px;color:#7a7a7a;transform:scaleX(0.929);">CanOverride</div>
<div class="t" style="left:1098px;top:593.8px;font-size:12.5px;color:#7a7a7a;font-weight:bold;transform:scaleX(0.851);">False</div>
<div class="a" style="left:942px;top:612px;width:152px;height:18px;background:#fff;"></div>
<div class="a" style="left:1095px;top:612px;width:160px;height:18px;background:#fff;"></div>
<div class="t" style="left:946.2px;top:612.8px;font-size:12.5px;color:#7a7a7a;transform:scaleX(0.884);">File</div>
<div class="a" style="left:1098px;top:612px;width:156.5px;height:18px;overflow:hidden"><div class="t" style="left:0;top:0.8px;font-size:12.5px;font-weight:bold;color:#7a7a7a;transform:scaleX(0.959)">c:\users\11\documents\visual studio 2013</div></div>
<div class="a" style="left:942px;top:631px;width:152px;height:18px;background:#fff;"></div>
<div class="a" style="left:1095px;top:631px;width:160px;height:18px;background:#fff;"></div>
<div class="t" style="left:946.2px;top:631.8px;font-size:12.5px;color:#7a7a7a;transform:scaleX(0.948);">FullName</div>
<div class="t" style="left:1098px;top:631.8px;font-size:12.5px;color:#7a7a7a;font-weight:bold;transform:scaleX(0.924);">Lophoclaptrinh::getname</div>
<div class="a" style="left:942px;top:650px;width:152px;height:18px;background:#fff;"></div>
<div class="a" style="left:1095px;top:650px;width:160px;height:18px;background:#fff;"></div>
<div class="t" style="left:946.2px;top:650.8px;font-size:12.5px;color:#111;transform:scaleX(0.931);">IsConstant</div>
<div class="t" style="left:1098px;top:650.8px;font-size:12.5px;color:#111;font-weight:bold;transform:scaleX(0.851);">False</div>
<svg class="a" style="left:1258.5px;top:540.5px" width="10" height="6" viewBox="0 0 10 6"><path d="M0 5.4 L5 0 L10 5.4 Z" fill="#868999"/></svg>
<div class="a" style="left:1259px;top:552px;width:9px;height:31px;background:#cdced5;"></div>
<svg class="a" style="left:1258.5px;top:655.5px" width="10" height="6" viewBox="0 0 10 6"><path d="M0 0 L5 5.4 L10 0 Z" fill="#868999"/></svg>
<div class="t" style="left:933.2px;top:673.6px;font-size:12.5px;color:#111;font-weight:bold;transform:scaleX(0.906);">C++</div>
<!-- status_taskbar -->
<div class="a" style="left:0px;top:737px;width:1280px;height:23px;background:#007acc;"></div>
<div class="t" style="left:5px;top:740.3px;font-size:12.5px;color:#fff;transform:scaleX(0.858);">Ready</div>
<div class="t" style="left:926.1px;top:740.3px;font-size:12.5px;color:#fff;transform:scaleX(0.892);">Ln 22</div>
<div class="t" style="left:1018.2px;top:740.3px;font-size:12.5px;color:#fff;transform:scaleX(0.894);">Col 17</div>
<div class="t" style="left:1110.2px;top:740.3px;font-size:12.5px;color:#fff;transform:scaleX(0.881);">Ch 14</div>
<div class="t" style="left:1245.9px;top:740.3px;font-size:12.5px;color:#fff;transform:scaleX(0.897);">INS</div>
<div class="a" style="left:0;top:760px;width:1280px;height:40px;background:linear-gradient(90deg,#79797b 0,#7e7e80 56px,#8e8b8b 100px,#ab9f9d 140px,#b3a5a2 180px,#a89f9d 240px,#a39b9a 330px,#b1a8a6 440px,#b3afae 500px,#b1b1b1 545px,#a3a2a2 600px,#909090 660px,#979294 720px,#a39898 760px,#958e8e 820px,#8b8a8b 860px,#8f8686 920px,#7d7b7c 1000px,#6f6f71 1060px,#68686a 1150px,#646466 1280px)"></div>
<div class="a" style="left:0;top:760px;width:1280px;height:40px;background:linear-gradient(180deg,rgba(30,40,60,.55) 0,rgba(255,255,255,.35) 1px,rgba(255,255,255,.12) 2px,rgba(255,255,255,.04) 50%,rgba(0,0,0,.06) 100%)"></div>
<svg class="a" style="left:8px;top:761px" width="39" height="38" viewBox="0 0 39 38"><defs><radialGradient id="og" cx="50%" cy="96%" r="95%"><stop offset="0" stop-color="#3fe6ff"/><stop offset="0.22" stop-color="#1ea6e6"/><stop offset="0.5" stop-color="#1b6fbd"/><stop offset="0.8" stop-color="#1d5596"/><stop offset="1" stop-color="#163f78"/></radialGradient><linearGradient id="oh" x1="0" y1="0" x2="0" y2="1"><stop offset="0" stop-color="#fff" stop-opacity=".7"/><stop offset="1" stop-color="#fff" stop-opacity=".12"/></linearGradient></defs><circle cx="19" cy="18.8" r="17.8" fill="url(#og)" stroke="#b8c4d4" stroke-width=".8"/><circle cx="19" cy="18.8" r="17" fill="none" stroke="#164a8c" stroke-width="1.2"/><path d="M3.2 15.4 A16 16 0 0 1 34.8 15.4 C27 19.6 11 19.6 3.2 15.4 Z" fill="url(#oh)"/><path d="M11.4 8.6 C14.6 6.8 17.2 7 20 8.4 L18.2 16.6 C15.6 15.4 12.8 15.4 9.6 17.2 Z" fill="#ee5a24"/><path d="M11.4 8.6 C14.6 6.8 17.2 7 20 8.4 L19.2 12 C16.4 10.8 13.6 10.8 10.6 12.4 Z" fill="#f58a3c" opacity=".7"/><path d="M21.6 9.2 C24.4 10.6 27.4 10.6 30.8 8.8 L29 17 C25.8 18.8 22.8 18.6 19.8 17.2 Z" fill="#84bf3a"/><path d="M9.2 18.8 C12.4 17 15.2 17 17.8 18.4 L16 26.6 C13.4 25.2 10.6 25.2 7.4 27 Z" fill="#2e9be6"/><path d="M19.4 19 C22.4 20.4 25.4 20.4 28.6 18.6 L26.8 26.8 C23.6 28.6 20.6 28.4 17.6 27 Z" fill="#fbbf14"/></svg>
<div class="a" style="left:59px;top:760px;width:60px;height:41px;border-radius:3px;border:1px solid rgba(40,40,45,.6);box-shadow:inset 0 0 0 1px rgba(255,255,255,.55);background:linear-gradient(180deg,rgba(255,255,255,.3) 0%,rgba(255,255,255,.22) 45%,rgba(255,255,255,.12) 50%,rgba(255,255,255,.2) 100%)"></div>
<svg class="a" style="left:72px;top:763px" width="34" height="34" viewBox="0 0 34 34"><circle cx="16.8" cy="16.8" r="16.4" fill="#fbfdfa"/><path d="M14.2 2.2 A14.8 14.8 0 1 0 31.6 17.4 L23.2 17 A6.4 6.4 0 1 1 15.6 10.4 Z" fill="#62b257"/><circle cx="16.8" cy="16.8" r="4.7" fill="#62b257"/><path d="M16.6 2.6 L18.6 2.4 L18 9 L16.6 8.8 Z" fill="#f07422"/><path d="M25.6 2.4 L30.6 2 L29.4 5.6 L23 12 L21.2 10.6 Z" fill="#62b257"/><path d="M29.6 9.6 L30.8 12 L25 14.6 L24 13 Z" fill="#f07422"/></svg>
<svg class="a" style="left:134px;top:765px" width="34" height="32" viewBox="0 0 34 32"><defs><linearGradient id="fg" x1="0" y1="0" x2="0" y2="1"><stop offset="0" stop-color="#f9eaa8"/><stop offset="1" stop-color="#edcf72"/></linearGradient><linearGradient id="bg2" x1="0" y1="0" x2="0" y2="1"><stop offset="0" stop-color="#d4ecfb"/><stop offset=".3" stop-color="#8ecbf0"/><stop offset="1" stop-color="#5fb0e6"/></linearGradient></defs><path d="M1.6 3.6 Q1.6 2 3.2 2 H16 Q17.2 2 17.2 3.2 V8 H1.6 Z" fill="#f3dc8c" stroke="#d9bd62" stroke-width=".6"/><rect x="3.6" y="2.4" width="11.6" height="3.4" fill="#fff"/><rect x="3.6" y="2.4" width="3.6" height="2.4" fill="#17b02c"/><path d="M11.4 6 Q11.4 4.6 12.8 4.6 H22.6 Q23.8 4.6 23.8 5.8 V10 H11.4 Z" fill="#f3dc8c" stroke="#d9bd62" stroke-width=".6"/><rect x="12.6" y="5" width="9.8" height="3" fill="#fff"/><rect x="12.6" y="5" width="3.2" height="2.2" fill="#d8342a"/><path d="M18.8 8 Q18.8 6.6 20.2 6.6 H31.4 Q32.8 6.6 32.8 8 V12 H18.8 Z" fill="#f3dc8c" stroke="#d9bd62" stroke-width=".6"/><rect x="20.4" y="7.2" width="10.6" height="2.8" fill="#fff"/><rect x="20.4" y="7.2" width="3.4" height="2.2" fill="#2a8fe8"/><path d="M1.4 8 H18 L20 10.4 H33 V28.6 H1.4 Z" fill="url(#fg)" stroke="#dcc068" stroke-width=".7"/><path d="M6.4 18 H27.6 Q29.4 18 29.4 19.8 V31 H23.8 V24.6 H10.4 V31 H4.8 V19.8 Q4.8 18 6.4 18 Z" fill="url(#bg2)" stroke="#4f9fd6" stroke-width=".9"/><path d="M6.6 19 H27.6 Q28.4 19 28.4 20 V21.4 H5.8 V20 Q5.8 19 6.6 19 Z" fill="#e6f5fd" opacity=".9"/></svg>
<svg class="a" style="left:197px;top:764px" width="34" height="32" viewBox="0 0 34 32"><defs><radialGradient id="pg" cx="50%" cy="22%" r="85%"><stop offset="0" stop-color="#e6f4ff"/><stop offset=".35" stop-color="#7ab8ee"/><stop offset=".7" stop-color="#2f7fd2"/><stop offset="1" stop-color="#16539e"/></radialGradient></defs><circle cx="15.6" cy="15" r="14.2" fill="url(#pg)" stroke="#1f5aa4" stroke-width="1"/><path d="M2.6 11.6 C8 15.4 23 15.4 28.6 11.6 C28.4 16.4 24 21 15.6 21 C7 21 2.8 16.4 2.6 11.6 Z" fill="#1c64b8" opacity=".55"/><path d="M11.4 9.6 C12 6 16.6 4.8 19.6 7.4 C21.2 8.8 21.4 10.8 22.4 12.4 C25 15.4 27 19.4 27.4 23.4 C28.6 24.6 29.8 25.6 30 26.8 C28.6 27.8 26.6 27.6 25 27 C23 28.4 19 29 15.6 28.6 C12 28 10.4 25 10.6 21.4 C10.8 18 10.6 13.6 11.4 9.6 Z" fill="#8ed43a" stroke="#3c7a1c" stroke-width=".7"/><path d="M12.4 8.6 C13.6 6 17.6 5.6 19.4 7.6 C20.4 9 20.6 11 20 13 C17.4 14.2 14 13.4 12.4 11.4 Z" fill="#f2ea3a"/><path d="M12.6 7.8 C14 6 16.6 5.6 18.4 6.8 C17 8 14.6 8.6 12.6 7.8 Z" fill="#6fd0e8"/><path d="M17.6 14.6 C21.6 15.4 24.6 19.6 24.8 24.4 C21 24 17.8 20.4 17.6 14.6 Z" fill="#d6ea6a" stroke="#d2402a" stroke-width="1"/><path d="M8.8 11.6 C9 9.4 11.4 8.4 13 9.6 C13.8 11.6 13 14.4 11.2 15.6 C9.6 15 8.6 13.4 8.8 11.6 Z" fill="#ea2a22" stroke="#8a1610" stroke-width=".4"/><circle cx="16" cy="9.8" r="1.3" fill="#15122a"/><path d="M13.6 28.4 V30 M15.6 28.6 V30.2 M18.6 28.6 V30.2 M20.4 28.4 V30" stroke="#a05a3a" stroke-width="1.1"/></svg>
<div class="a" style="left:245px;top:760px;width:59px;height:41px;border-radius:3px;border:1px solid rgba(40,40,45,.6);box-shadow:inset 0 0 0 1px rgba(255,255,255,.55);background:linear-gradient(180deg,rgba(255,255,255,.3) 0%,rgba(255,255,255,.22) 45%,rgba(255,255,255,.12) 50%,rgba(255,255,255,.2) 100%)"></div>
<svg class="a" style="left:259px;top:763px" width="33" height="33" viewBox="0 0 33 33"><circle cx="11" cy="11" r="9.6" fill="#00aff0"/><circle cx="22" cy="22" r="9.6" fill="#00aff0"/><circle cx="16.5" cy="16.5" r="13.4" fill="#00aff0"/><text x="16.6" y="25.4" text-anchor="middle" font-family="Liberation Sans,sans-serif" font-weight="bold" font-size="24.5" fill="#fff">S</text></svg>
<div class="a" style="left:307px;top:760px;width:59px;height:41px;border-radius:3px;border:1px solid rgba(40,40,45,.6);box-shadow:inset 0 0 0 1px rgba(255,255,255,.55);background:linear-gradient(180deg,rgba(255,255,255,.3) 0%,rgba(255,255,255,.22) 45%,rgba(255,255,255,.12) 50%,rgba(255,255,255,.2) 100%)"></div>
<svg class="a" style="left:319px;top:762px" width="36" height="34" viewBox="0 0 36 34"><defs><radialGradient id="gg" cx="38%" cy="28%" r="80%"><stop offset="0" stop-color="#e8f08a"/><stop offset=".35" stop-color="#8aa832"/><stop offset=".7" stop-color="#2a5aa8"/><stop offset="1" stop-color="#10306c"/></radialGradient></defs><path d="M8 9.6 C1 13 0.6 23 8.6 26.4 C12 27.8 15.6 27 18 25" fill="none" stroke="#e03a26" stroke-width="2.2"/><path d="M9.4 11.6 C3.8 14.4 3.6 21.6 9.4 24.2 C12.4 25.4 15 24.8 17 23.2" fill="none" stroke="#f0d22a" stroke-width="2"/><path d="M10.6 13.4 C6.4 15.6 6.4 20.4 10.2 22.2 C12.4 23 14.4 22.6 16 21.4" fill="none" stroke="#3aa83a" stroke-width="2"/><path d="M6.6 27.4 C10 29.4 15 29 18.6 26.6" fill="none" stroke="#3a6cd4" stroke-width="2.2"/><circle cx="22.4" cy="11.6" r="10.8" fill="url(#gg)"/><path d="M13.8 16.6 L33.2 20.8 L18.8 32.4 L20.6 24.6 Z" fill="#159a1c" stroke="#0a5a10" stroke-width=".7"/><path d="M20.6 24.6 L33.2 20.8 L18.8 32.4 Z" fill="#0d7a14"/></svg>
<div class="a" style="left:370px;top:760px;width:59px;height:41px;border-radius:3px;border:1px solid rgba(40,40,45,.6);box-shadow:inset 0 0 0 1px rgba(255,255,255,.55);background:linear-gradient(180deg,rgba(255,255,255,.62) 0%,rgba(255,255,255,.5) 45%,rgba(255,255,255,.38) 50%,rgba(255,255,255,.5) 100%)"></div>
<svg class="a" style="left:382px;top:764px" width="34" height="33" viewBox="0 0 34 33"><path d="M24 1 L32.4 4.4 V27.8 L24 31.4 L12.4 20 L3.8 25.6 L1 23.8 V8.6 L3.8 6.8 L12.4 12.4 Z M23.6 10.4 L15.8 16.2 L23.6 22 Z M4.2 11.6 V20.8 L8.6 16.2 Z" fill="#68217a" fill-rule="evenodd" stroke="#fbf8fc" stroke-width="1.3" stroke-linejoin="round"/></svg>
<div class="t" style="left:1071.3px;top:770px;color:#fff;transform:scaleX(0.864);">EN</div>
<svg class="a" style="left:1103px;top:778px" width="8" height="6" viewBox="0 0 8 6"><path d="M0 5.4 L3.8 0.4 L7.6 5.4 Z" fill="#fff"/></svg>
<svg class="a" style="left:1123px;top:773px" width="15" height="16" viewBox="0 0 15 16"><rect x="1" y="3" width="9" height="12" rx="1.4" fill="none" stroke="#fff" stroke-width="1.5"/><rect x="3.6" y="1" width="3.8" height="2" fill="#fff"/><path d="M7 5.4 H13 V9.4 Q13 11.6 10.8 11.6 H9.2 Q7 11.6 7 9.4 Z" fill="#fff" stroke="#555" stroke-width=".6"/><path d="M8.6 2.6 V5.4 M11.4 2.6 V5.4" stroke="#fff" stroke-width="1.3"/><path d="M10 11.6 V13.6 H6" fill="none" stroke="#fff" stroke-width="1.2"/></svg>
<svg class="a" style="left:1147px;top:774px" width="16" height="13" viewBox="0 0 16 13"><rect x="0.4" y="9.6" width="2" height="2.4" fill="#fff"/><rect x="3.4" y="7.6" width="2" height="4.4" fill="#fff"/><rect x="6.4" y="5.6" width="2" height="6.4" fill="#fff"/><rect x="9.4" y="3.4" width="2" height="8.6" fill="#fff"/><rect x="12.4" y="0.8" width="2.4" height="11.2" fill="#ddd" stroke="#fff" stroke-width=".5"/></svg>
<svg class="a" style="left:1171px;top:773px" width="15" height="16" viewBox="0 0 15 16"><path d="M0.8 5.4 H3.4 L7.6 1.4 V14.6 L3.4 10.6 H0.8 Z" fill="#fff"/><path d="M9.6 5 Q11.2 8 9.6 11 M11.6 3 Q14.4 8 11.6 13" fill="none" stroke="#fff" stroke-width="1.2"/></svg>
<div class="t" style="left:1204.6px;top:765px;font-size:12.5px;color:#fff;transform:scaleX(0.928);">10:36 AM</div>
<div class="t" style="left:1206.9px;top:782px;font-size:12.5px;color:#fff;transform:scaleX(0.939);">9/6/2015</div>
<div class="a" style="left:1266px;top:761px;width:14px;height:39px;border-left:1px solid rgba(20,20,25,.6);box-shadow:inset 1px 0 0 rgba(255,255,255,.45);background:linear-gradient(180deg,rgba(255,255,255,.28),rgba(255,255,255,.1))"></div>
</body>
</html>
